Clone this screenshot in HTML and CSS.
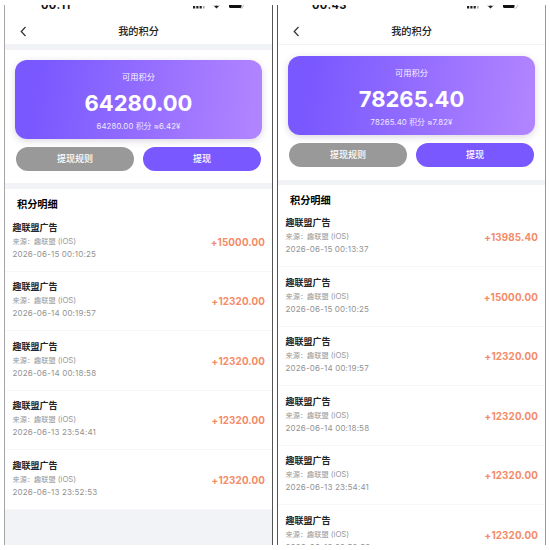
FILE: index.html
```
<!DOCTYPE html>
<html lang="zh-CN">
<head>
<meta charset="utf-8">
<title>我的积分</title>
<link rel="stylesheet" href="styles.css">
</head>
<body>
<main class="screens">
  <section class="phone first">
    <div class="status"><span class="clock">00:11</span>
      <svg class="indicators" width="54" height="4" viewBox="0 0 54 4"><path d="M0 1h2.200v2.500H0zM3.300 1h2.200v2.500H3.300zM6.600 1h2.200v2.500H6.600z" fill="#222"/><path d="M10 1h1.600v2.500H10z" fill="#aaa"/><path d="M20 0l1.500 1 2-.6 2 .6L27 0l-3.500 3.600z" fill="#222"/><path d="M36 0h12.500v1.500q0 1.500-1.500 1.500h-9.500Q36 3 36 1.500z" fill="#111"/><path d="M50.500 0q0 3.300-3 3.700" fill="none" stroke="#aaa" stroke-width=".7"/></svg>
    </div>
    <header class="nav"><svg class="back" width="7" height="11" viewBox="0 0 7 11"><path d="M5.500 1L1.200 5.500l4.300 4.500"/></svg><h1>我的积分</h1></header>
    <div class="summary">
      <div class="card"><p class="label">可用积分</p><p class="total">64280.00</p><p class="rate">64280.00 积分 ≈6.42¥</p></div>
      <div class="actions"><button class="rules">提现规则</button><button class="withdraw">提现</button></div>
    </div>
    <div class="details">
      <h2>积分明细</h2>
      <ul>
        <li><div><h3>趣联盟广告</h3><p class="source">来源：趣联盟 <span>(iOS)</span></p><time>2026-06-15 00:10:25</time></div><b>+15000.00</b></li>
        <li><div><h3>趣联盟广告</h3><p class="source">来源：趣联盟 <span>(iOS)</span></p><time>2026-06-14 00:19:57</time></div><b>+12320.00</b></li>
        <li><div><h3>趣联盟广告</h3><p class="source">来源：趣联盟 <span>(iOS)</span></p><time>2026-06-14 00:18:58</time></div><b>+12320.00</b></li>
        <li><div><h3>趣联盟广告</h3><p class="source">来源：趣联盟 <span>(iOS)</span></p><time>2026-06-13 23:54:41</time></div><b>+12320.00</b></li>
        <li><div><h3>趣联盟广告</h3><p class="source">来源：趣联盟 <span>(iOS)</span></p><time>2026-06-13 23:52:53</time></div><b>+12320.00</b></li>
      </ul>
    </div>
  </section>
  <section class="phone second">
    <div class="status"><span class="clock">00:43</span>
      <svg class="indicators" width="54" height="4" viewBox="0 0 54 4"><path d="M0 1h2.200v2.500H0zM3.300 1h2.200v2.500H3.300zM6.600 1h2.200v2.500H6.600z" fill="#222"/><path d="M10 1h1.600v2.500H10z" fill="#aaa"/><path d="M20 0l1.500 1 2-.6 2 .6L27 0l-3.500 3.600z" fill="#222"/><path d="M36 0h11.500v1.500q0 1.500-1.500 1.500h-8.500Q36 3 36 1.500z" fill="#111"/><path d="M50.500 0q0 3.300-3 3.700" fill="none" stroke="#aaa" stroke-width=".7"/></svg>
    </div>
    <header class="nav"><svg class="back" width="7" height="11" viewBox="0 0 7 11"><path d="M5.500 1L1.200 5.500l4.300 4.500"/></svg><h1>我的积分</h1></header>
    <div class="summary">
      <div class="card"><p class="label">可用积分</p><p class="total">78265.40</p><p class="rate">78265.40 积分 ≈7.82¥</p></div>
      <div class="actions"><button class="rules">提现规则</button><button class="withdraw">提现</button></div>
    </div>
    <div class="details">
      <h2>积分明细</h2>
      <ul>
        <li><div><h3>趣联盟广告</h3><p class="source">来源：趣联盟 <span>(iOS)</span></p><time>2026-06-15 00:13:37</time></div><b>+13985.40</b></li>
        <li><div><h3>趣联盟广告</h3><p class="source">来源：趣联盟 <span>(iOS)</span></p><time>2026-06-15 00:10:25</time></div><b>+15000.00</b></li>
        <li><div><h3>趣联盟广告</h3><p class="source">来源：趣联盟 <span>(iOS)</span></p><time>2026-06-14 00:19:57</time></div><b>+12320.00</b></li>
        <li><div><h3>趣联盟广告</h3><p class="source">来源：趣联盟 <span>(iOS)</span></p><time>2026-06-14 00:18:58</time></div><b>+12320.00</b></li>
        <li><div><h3>趣联盟广告</h3><p class="source">来源：趣联盟 <span>(iOS)</span></p><time>2026-06-13 23:54:41</time></div><b>+12320.00</b></li>
        <li><div><h3>趣联盟广告</h3><p class="source">来源：趣联盟 <span>(iOS)</span></p><time>2026-06-13 23:52:53</time></div><b>+12320.00</b></li>
      </ul>
    </div>
  </section>
</main>
</body>
</html>
```
FILE: styles.css
```
* { box-sizing: border-box; margin: 0; padding: 0; }
body { width: 550px; height: 550px; overflow: hidden; background: #fff; font-family: Inter, "Noto Sans CJK SC", sans-serif; }
.screens { display: flex; gap: 4px; padding: 5px 4px; }
.phone { height: 540px; overflow: hidden; background: #f2f3f6; display: flex; flex-direction: column; }
.first { width: 269px; border-left: 1px solid #a5a5a5; border-right: 1px solid #555; }
.second { width: 269px; border-left: 1px solid #555; border-right: 1px solid #999; }
.status { height: 12px; flex: none; background: #fff; display: flex; justify-content: space-between; align-items: flex-start; padding: 0 25px 0 36px; overflow: hidden; }
.second .status { padding: 0 24px 0 34px; }
.clock { font-size: 11px; line-height: 12px; font-weight: 700; letter-spacing: .3px; margin-top: -6px; color: #111; }
.indicators { display: block; }
.nav { height: 27px; flex: none; background: #fff; display: grid; grid-template-columns: 30px 1fr 30px; align-items: center; }
.back { margin: 2px 0 0 15px; fill: none; stroke: #333; stroke-width: 1.200; }
.nav h1 { font-size: 10.200px; line-height: 14px; font-weight: 500; text-align: center; color: #222; }
.summary { background: #fff; flex: none; }
.first .summary { height: 133px; margin-top: 6px; padding: 10px 10px 0; }
.second .summary { height: 135px; margin-top: 1px; padding: 11px 10px 0 10px; }
.card { height: 79px; border-radius: 12px; background: linear-gradient(97deg, #7958ff 10%, #b184ff 97%); box-shadow: 0 2px 7px rgba(70, 50, 100, .2); color: #fff; text-align: center; padding-top: 10px; }
.label { font-size: 8.200px; line-height: 14px; opacity: .94; }
.total { font-size: 22px; line-height: 28px; font-weight: 700; margin-top: 5px; }
.rate { font-size: 7.800px; line-height: 12px; margin-top: 2.500px; opacity: .85; letter-spacing: .1px; }
.actions { display: flex; gap: 9px; margin: 8px 1px 0; }
.actions button { flex: 1; height: 24px; border: 0; border-radius: 12px; color: #fff; font: 500 9px/24px Inter, "Noto Sans CJK SC", sans-serif; }
.rules { background: #999; }
.withdraw { background: #7958ff; }
.details { flex: none; background: #fff; }
.first .details { margin-top: 6px; }
.second .details { margin-top: 5px; }
.details h2 { height: 23px; padding: 7px 12px 0; font-size: 10.200px; line-height: 16px; font-weight: 700; color: #000; }
.second .details h2 { height: 22.500px; }
.details ul { list-style: none; }
.details li { height: 59.500px; display: flex; justify-content: space-between; align-items: center; padding: 0 7px 0 7.500px; border-bottom: 1px solid #f7f7f7; }
h3 { font-size: 9px; line-height: 14px; font-weight: 700; color: #252525; }
.source { font-size: 7.200px; line-height: 13px; color: #999; }
.source span { font-size: 7.800px; }
time { display: block; font-size: 8px; line-height: 13.800px; letter-spacing: .17px; color: #929292; }
.details b { font-size: 9.800px; line-height: 14px; font-weight: 700; letter-spacing: .15px; margin-top: 3px; color: #f48b68; }
```
